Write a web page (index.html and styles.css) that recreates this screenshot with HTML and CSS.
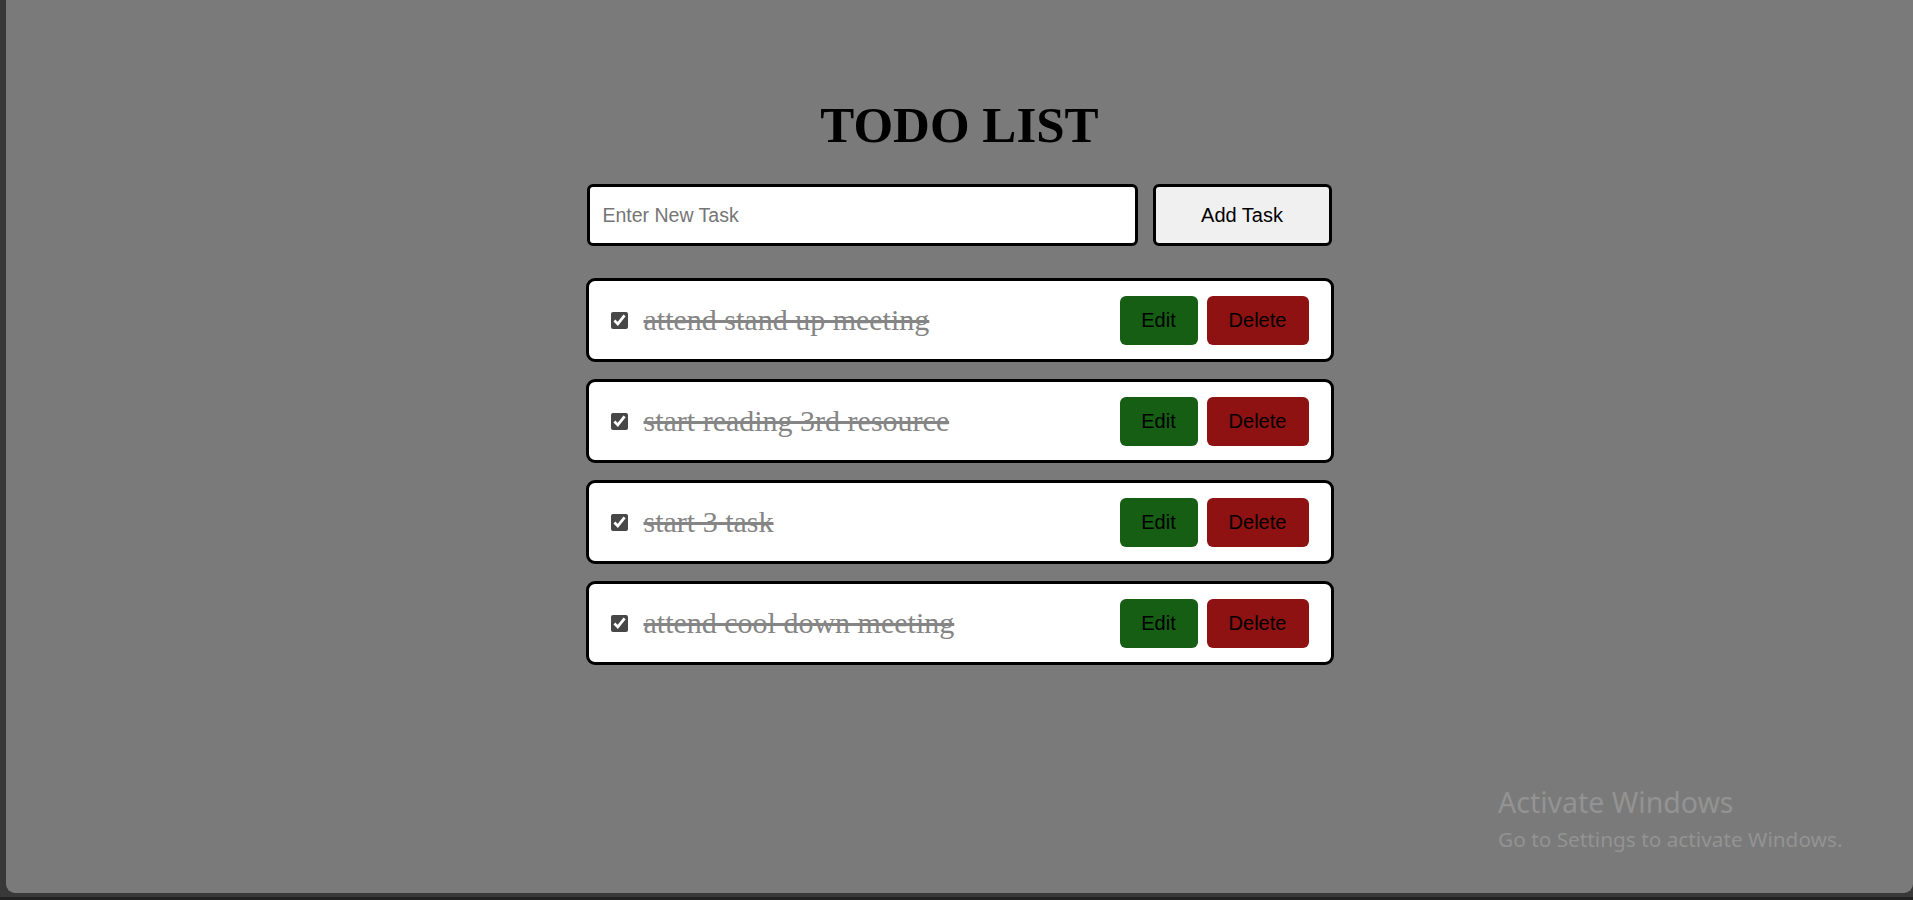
FILE: index.html
```html
<!DOCTYPE html>
<html lang="en">
<head>
<meta charset="utf-8">
<title>Todo List</title>
<link rel="stylesheet" href="styles.css">
</head>
<body>
  <div class="frame">
    <main class="app">
      <h1 class="title">TODO LIST</h1>
      <form class="add-form">
        <input class="task-input" type="text" placeholder="Enter New Task">
        <button class="add-btn" type="button">Add Task</button>
      </form>
      <ul class="task-list">
        <li class="task">
          <input class="task-check" type="checkbox" checked>
          <span class="task-text">attend stand up meeting</span>
          <div class="task-actions">
            <button class="btn btn-edit" type="button">Edit</button>
            <button class="btn btn-delete" type="button">Delete</button>
          </div>
        </li>
        <li class="task">
          <input class="task-check" type="checkbox" checked>
          <span class="task-text">start reading 3rd resource</span>
          <div class="task-actions">
            <button class="btn btn-edit" type="button">Edit</button>
            <button class="btn btn-delete" type="button">Delete</button>
          </div>
        </li>
        <li class="task">
          <input class="task-check" type="checkbox" checked>
          <span class="task-text">start 3 task</span>
          <div class="task-actions">
            <button class="btn btn-edit" type="button">Edit</button>
            <button class="btn btn-delete" type="button">Delete</button>
          </div>
        </li>
        <li class="task">
          <input class="task-check" type="checkbox" checked>
          <span class="task-text">attend cool down meeting</span>
          <div class="task-actions">
            <button class="btn btn-edit" type="button">Edit</button>
            <button class="btn btn-delete" type="button">Delete</button>
          </div>
        </li>
      </ul>
    </main>
    <div class="watermark">
      <div class="wm-title">Activate Windows</div>
      <div class="wm-sub">Go to Settings to activate Windows.</div>
    </div>
  </div>
  <div class="taskbar"></div>
</body>
</html>
```

FILE: styles.css
```css
* { box-sizing: border-box; }

html, body {
  margin: 0;
  padding: 0;
  width: 1913px;
  height: 900px;
  overflow: hidden;
  background: #383838;
}

body {
  display: flex;
  flex-direction: column;
}

.frame {
  position: relative;
  margin-left: 6px;
  height: 893px;
  background: #7a7a7a;
  border-radius: 0 0 9px 9px;
  padding-top: 1px;
}

.taskbar {
  margin-top: 4px;
  height: 3px;
  background: #222222;
}

.app {
  width: 748px;
  margin: 0 auto;
}

.title {
  margin: 95px 0 0;
  font-family: "Liberation Serif", "Times New Roman", serif;
  font-weight: bold;
  font-size: 51px;
  line-height: 58px;
  text-align: center;
  color: #000;
}

.add-form {
  display: flex;
  gap: 15px;
  margin: 30px 0 0 1px;
}

.task-input {
  width: 551px;
  height: 62px;
  border: 3px solid #000;
  border-radius: 6px;
  padding: 0 13px;
  font-family: "Liberation Sans", Arial, sans-serif;
  font-size: 19.5px;
  color: #000;
  background: #fff;
  outline: none;
}

.task-input::placeholder {
  color: #757575;
}

.add-btn {
  width: 179px;
  height: 62px;
  border: 3px solid #000;
  border-radius: 6px;
  background: #f0f0f0;
  font-family: "Liberation Sans", Arial, sans-serif;
  font-size: 20px;
  color: #000;
}

.task-list {
  list-style: none;
  margin: 32px 0 0;
  padding: 0;
  display: flex;
  flex-direction: column;
  gap: 17px;
}

.task {
  display: flex;
  align-items: center;
  height: 84px;
  background: #fff;
  border: 3px solid #000;
  border-radius: 9px;
  padding: 0 22px 0 22px;
}

.task-check {
  width: 17px;
  height: 17px;
  margin: 0 16px 0 0;
  accent-color: #474747;
}

.task-text {
  flex: 1;
  font-family: "Liberation Serif", "Times New Roman", serif;
  font-size: 30px;
  color: #858585;
  text-decoration: line-through;
  text-decoration-thickness: 3px;
}

.task-actions {
  display: flex;
  gap: 9px;
}

.btn {
  height: 49px;
  border: none;
  border-radius: 6px;
  padding: 0;
  font-family: "Liberation Sans", Arial, sans-serif;
  font-size: 20px;
  color: #000;
}

.btn-edit {
  width: 78px;
  background: #155e14;
}

.btn-delete {
  width: 102px;
  background: #8e1212;
}

.watermark {
  position: absolute;
  left: 1492px;
  top: 784px;
  font-family: "Noto Sans", "Open Sans", sans-serif;
  color: #939393;
}

.wm-title {
  font-size: 28.5px;
  line-height: 36px;
}

.wm-sub {
  font-size: 20.8px;
  line-height: 28px;
  margin-top: 5px;
}
```
